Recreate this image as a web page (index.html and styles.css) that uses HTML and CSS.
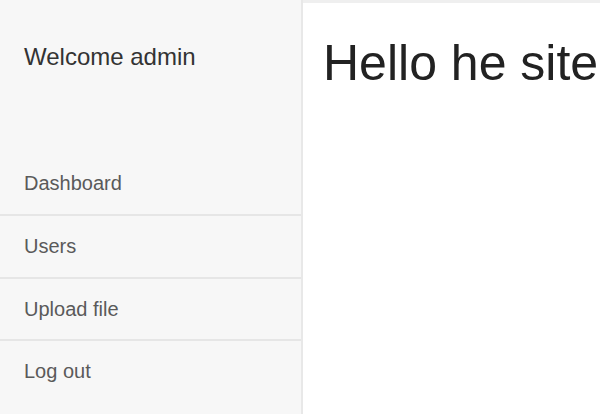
FILE: index.html
```html
<!DOCTYPE html>
<html lang="en">
<head>
<meta charset="utf-8">
<title>Admin</title>
<link rel="stylesheet" href="styles.css">
</head>
<body>
<div class="layout">
  <aside class="sidebar">
    <div class="welcome">Welcome admin</div>
    <nav class="menu">
      <a class="menu-item" href="#">Dashboard</a>
      <a class="menu-item" href="#">Users</a>
      <a class="menu-item" href="#">Upload file</a>
      <a class="menu-item" href="#">Log out</a>
    </nav>
  </aside>
  <main class="content">
    <h1 class="title">Hello he site</h1>
  </main>
</div>
</body>
</html>
```
FILE: styles.css
```css
html, body {
  margin: 0;
  padding: 0;
  height: 100%;
  background: #ffffff;
  font-family: "Liberation Sans", Arial, sans-serif;
  overflow: hidden;
}

.layout {
  display: flex;
  height: 100%;
}

.sidebar {
  width: 301px;
  flex: none;
  background: #f7f7f7;
  border-right: 2px solid #e8e8e8;
  display: flex;
  flex-direction: column;
}

.welcome {
  height: 153px;
  box-sizing: border-box;
  padding: 43px 0 0 24px;
  font-size: 24px;
  line-height: 28px;
  color: #333333;
}

.menu {
  display: flex;
  flex-direction: column;
}

.menu-item {
  display: flex;
  align-items: center;
  height: 61px;
  padding-left: 24px;
  font-size: 20px;
  color: #5a5a5a;
  text-decoration: none;
  border-bottom: 2px solid #e6e6e6;
}

.menu-item:nth-child(3) {
  height: 60px;
}

.menu-item:last-child {
  border-bottom: none;
}

.content {
  flex: 1;
  min-width: 0;
  border-top: 3px solid #efefef;
  padding: 0 20px;
  overflow: hidden;
}

.title {
  margin: 32px 0 0;
  font-size: 50px;
  line-height: 56px;
  font-weight: normal;
  color: #222222;
  white-space: nowrap;
}
```
